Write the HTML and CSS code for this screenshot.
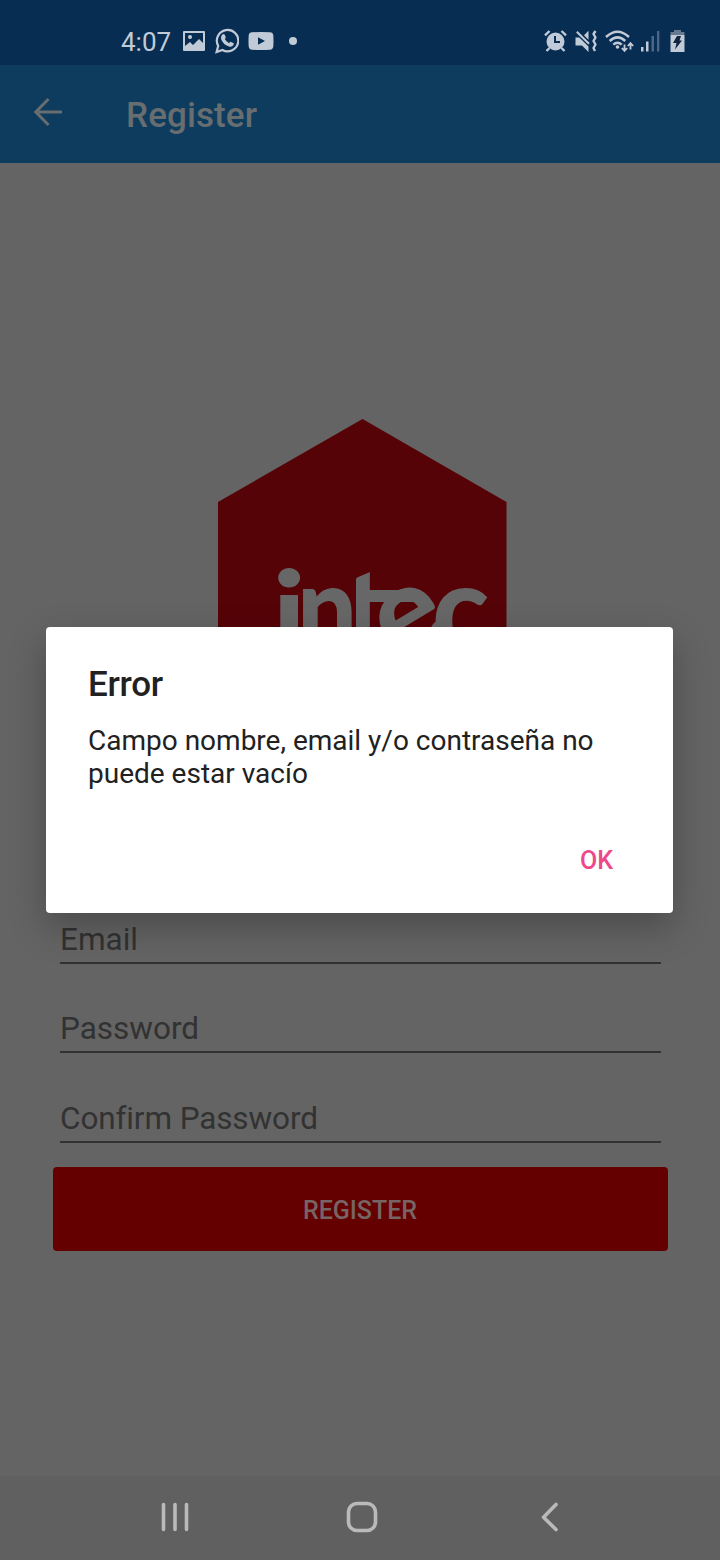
FILE: index.html
```html
<!DOCTYPE html>
<html lang="es">
<head>
<meta charset="utf-8">
<title>Register</title>
<link rel="stylesheet" href="styles.css">
</head>
<body>
<div class="screen">
  <header class="status">
    <div class="status-left">
      <span class="clock">4:07</span>
      <svg class="ic-photo" width="22" height="22" viewBox="0 0 22 22"><path fill="currentColor" fill-rule="evenodd" d="M1 1h20q1 0 1 1v18q0 1-1 1H1q-1 0-1-1V2q0-1 1-1zM2 3v13l5-4 3 3 6-6 4 4V3zM7 5a2 2 0 1 1 0 4 2 2 0 0 1 0-4z"/></svg>
      <svg class="ic-chat" width="24" height="26" viewBox="0 0 24 26"><path fill="none" stroke="currentColor" stroke-width="2.200" d="M1.600 24l1.600-6.200A10.700 10.700 0 1 1 7.400 22z"/><path fill="currentColor" d="M7.400 6.600q1.500-1.200 2.300.2l1 2.300q.3.8-.9 2 1.500 2.900 4.300 4.100 1.100-1.700 1.900-1.300l2.300 1.200q1 .5 0 2.200-1.500 2-4.300 1.100-6.200-2-7.900-7.400-.5-3 1.300-4.400z"/></svg>
      <svg class="ic-video" width="26" height="18" viewBox="0 0 26 18"><path fill="currentColor" fill-rule="evenodd" d="M4 .3Q13-.3 22 .3q3 .2 3.300 3Q25.700 9 25.300 14.500q-.3 3-3.300 3.200-9 .6-18 0-3-.2-3.300-3.200Q.3 9 .7 3.300 1 .5 4 .3zM10 5.200v7.600L17 9z"/></svg>
      <span class="dot"></span>
    </div>
    <div class="status-right">
      <svg width="23" height="22" viewBox="0 0 23 22"><path fill="currentColor" fill-rule="evenodd" d="M11.500 2.500a9 9 0 1 1 0 18 9 9 0 0 1 0-18zM10 6v7h6v-2h-4V6z"/><path fill="none" stroke="currentColor" stroke-width="2.400" d="M1 5.400L5.500 1M22 5.400L17.500 1M5.500 18l-3 3M17.500 18l3 3"/></svg>
      <svg class="ic-mute" width="23" height="23" viewBox="0 0 23 23"><path fill="currentColor" d="M.5 7.500h3.800L13.500 16.500V22L7 15.500H.5zM9 5.200L13.500 .700v9z"/><path fill="none" stroke="currentColor" stroke-width="2" d="M1.800 1.800L14 13.800"/><path fill="none" stroke="currentColor" stroke-width="2.400" stroke-linejoin="round" d="M20.500 1l-2 3 2 3.500-2 3.500 2 3.500-2 3.500 1.500 3"/></svg>
      <svg class="ic-wifi" width="29" height="23" viewBox="0 0 29 23"><g fill="none" stroke="currentColor" stroke-width="2.500"><path d="M1 7Q12.500 -3.500 24 7M4.700 11Q12.500 3.800 20.300 11M8.300 14.600q4.200-3.800 8.400 0"/><path stroke-width="1.800" d="M19.500 14.500v6M16.800 18l2.700 2.900 2.700-2.900M25.500 19.500v-6M22.800 16l2.700-2.900 2.700 2.900"/></g><circle cx="12.500" cy="17" r="1.800" fill="currentColor"/></svg>
      <svg class="ic-signal" width="19" height="22" viewBox="0 0 19 22"><path fill="currentColor" d="M0 17h2.500v4.500H0zM5 11.500h2.500v10H5z"/><path fill="#4c6785" d="M10.500 6H13v15.500h-2.500zM16 1h2.300v20.500H16z"/></svg>
      <svg class="ic-battery" width="15" height="22" viewBox="0 0 15 22"><path fill="#66798f" d="M4 0h7v2h3.500v3H.5V2H4z"/><path fill="currentColor" d="M.5 5h14v17H.5z"/><path fill="#10263f" d="M7 6h4L9.500 10.500H12L5 19.500l1.500-6.500H3z"/></svg>
    </div>
  </header>
  <div class="appbar">
    <svg class="back" width="30" height="30" viewBox="0 0 30 30"><path fill="none" stroke="currentColor" stroke-width="3" d="M29 15H3.500M15.500 2L2.800 15l12.700 13"/></svg>
    <h1>Register</h1>
  </div>
  <main class="content">
    <svg class="logo" width="289" height="332" viewBox="0 0 289 332" role="img" aria-label="intec">
      <defs><clipPath id="stem"><path d="M138 159l14-6v100h-14z"/></clipPath></defs>
      <path fill="#560307" d="M144.500 0L288.500 83v166l-144 83L0 249V83z"/>
      <g class="logo-mark">
        <text transform="translate(54.500 236) scale(1.050 .95)">i</text>
        <text transform="translate(79 234) scale(.87 1.010)">n</text>
        <g clip-path="url(#stem)"><text x="124" y="234">t</text></g>
        <path d="M151 171h46v12h-46z"/>
        <text class="mid" transform="translate(192 202) rotate(-31)" y="31">e</text>
        <text transform="translate(214 234) scale(.97 1.010)">c</text>
      </g>
    </svg>
    <form class="form">
      <div class="field">Email</div>
      <div class="field">Password</div>
      <div class="field confirm">Confirm Password</div>
      <button class="submit" type="button">REGISTER</button>
    </form>
  </main>
  <nav class="navbar">
    <svg width="460" height="84" viewBox="130 1476 460 84"><g fill="none" stroke="#bababa" stroke-width="3.600" stroke-linecap="round" stroke-linejoin="round"><path d="M163.500 1504.500v25M175 1504.500v25M186.500 1504.500v25M556 1504.500l-12.500 12.700 12.500 12.300"/><rect x="348.500" y="1503.500" width="27" height="27" rx="8.500"/></g></svg>
  </nav>
  <section class="dialog" role="alertdialog">
    <h2>Error</h2>
    <p>Campo nombre, email y/o contraseña no puede estar vacío</p>
    <button class="ok" type="button">OK</button>
  </section>
</div>
</body>
</html>
```
FILE: styles.css
```css
* { box-sizing: border-box; margin: 0; }
body { font-family: Roboto, "Liberation Sans", sans-serif; }
svg { display: block; flex: none; }
.screen {
  position: relative;
  display: flex;
  flex-direction: column;
  width: 720px;
  height: 1560px;
  overflow: hidden;
  background: #646464;
}
.status {
  display: flex;
  justify-content: space-between;
  height: 65px;
  padding: 17px 35px 0 121px;
  background: #082d52;
  color: #c1cbd7;
}
.status-left, .status-right { display: flex; align-items: center; height: 48px; }
.clock { width: 62px; font-size: 26px; line-height: 48px; padding-top: 2px; }
.ic-chat { margin-left: 10px; }
.ic-video { margin-left: 9px; }
.dot { width: 8px; height: 8px; margin-left: 15px; border-radius: 50%; background: currentColor; }
.ic-mute { margin-left: 8px; }
.ic-wifi { margin-left: 7px; }
.ic-signal { margin-left: 7px; }
.ic-battery { margin-left: 10px; }
.appbar {
  display: flex;
  align-items: center;
  height: 98px;
  padding: 0 33px;
  background: #0d3c5f;
  color: #686d70;
}
.back { margin-top: -4px; }
.appbar h1 { margin-left: 63px; padding-top: 4px; font-size: 35px; font-weight: 500; line-height: 42px; letter-spacing: .1px; }
.content { display: flex; flex-direction: column; flex: 1; padding: 256px 52px 0 53px; }
.logo { margin-left: 165px; }
.logo-mark { fill: #676767; font-family: Lato, sans-serif; font-size: 122px; font-weight: 900; }
.mid { text-anchor: middle; }
.form { display: flex; flex-direction: column; margin-top: 160px; }
.field {
  height: 53px;
  margin: 0 7px 36.300px;
  border-bottom: 2px solid #323232;
  color: #323232;
  font-size: 31.500px;
  line-height: 57px;
}
.confirm { letter-spacing: -.12px; font-variant-ligatures: common-ligatures; }
.submit {
  height: 84px;
  margin-top: -12px;
  border: 0;
  border-radius: 4px;
  background: #640000;
  color: #776464;
  font: 500 25px Roboto, sans-serif;
  padding: 3px 1px 0 0;
}
.navbar { display: flex; justify-content: center; height: 84px; background: #606060; }
.dialog {
  position: absolute;
  left: 46px;
  top: 627px;
  display: flex;
  flex-direction: column;
  width: 627px;
  height: 286px;
  padding: 37px 42px 28px;
  border-radius: 4px;
  background: #fff;
  color: #212121;
  box-shadow: 0 14px 36px rgba(0, 0, 0, .26);
}
.dialog h2 { font-size: 35px; font-weight: 500; line-height: 42px; letter-spacing: -.3px; }
.dialog p { margin-top: 18px; font-size: 28px; line-height: 33px; }
.ok {
  align-self: flex-end;
  margin: auto 18px 7px 0;
  padding: 0;
  border: 0;
  background: none;
  color: #ee4888;
  font: 500 25px/34px Roboto, sans-serif;
}
```
